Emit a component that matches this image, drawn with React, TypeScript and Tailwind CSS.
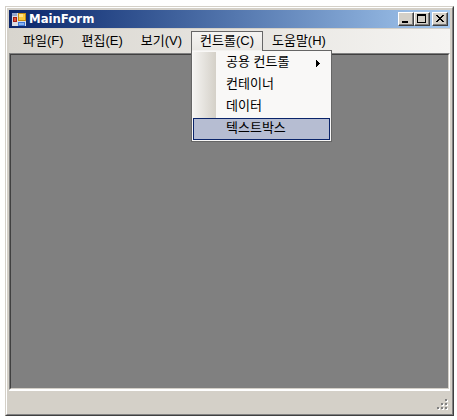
import { useState } from "react";

const MENUS = ["파일(F)", "편집(E)", "보기(V)", "컨트롤(C)", "도움말(H)"];

const CONTROL_ITEMS = [
	{ label: "공용 컨트롤", submenu: true },
	{ label: "컨테이너", submenu: false },
	{ label: "데이터", submenu: false },
	{ label: "텍스트박스", submenu: false },
];

const GRIP_DOTS = [
	[8, 0],
	[4, 4],
	[8, 4],
	[0, 8],
	[4, 8],
	[8, 8],
];

function AppIcon() {
	return (
		<svg className="h-4 w-4 shrink-0" viewBox="0 0 16 16" shapeRendering="crispEdges" aria-hidden="true">
			<rect x="1" y="2" width="14" height="13" fill="#d9dce4" />
			<rect x="1" y="2" width="5" height="3" fill="#93a5cc" />
			<rect x="2" y="6" width="4" height="5" fill="#a51f14" />
			<rect x="3" y="7" width="2" height="3" fill="#e0563c" />
			<rect x="7" y="2" width="8" height="8" fill="#c48c14" />
			<rect x="8" y="3" width="6" height="6" fill="#fac83c" />
			<rect x="8" y="3" width="4" height="3" fill="#fde08a" />
			<rect x="7" y="11" width="7" height="4" fill="#3f78d8" />
			<rect x="8" y="12" width="5" height="2" fill="#86b2f4" />
		</svg>
	);
}

function CaptionButton({ label, children }: { label: string; children: React.ReactNode }) {
	return (
		<button
			type="button"
			aria-label={label}
			className="h-[14px] w-4 border border-t-white border-l-white border-r-[#404040] border-b-[#404040] bg-[#d4d0c8] shadow-[inset_-1px_-1px_0_#808080]"
		>
			<svg className="block h-3 w-[14px]" viewBox="0 0 14 12" shapeRendering="crispEdges" aria-hidden="true">
				{children}
			</svg>
		</button>
	);
}

function TitleBar() {
	return (
		<header className="flex h-[18px] items-center bg-linear-to-r from-[#0a246a] to-[#a6caf0] px-[2px]">
			<AppIcon />
			<h1 className="ml-[2px] flex-1 font-['DejaVu_Sans_Condensed','DejaVu_Sans',sans-serif] text-[13px] leading-4 font-bold text-white">
				MainForm
			</h1>
			<div className="flex">
				<CaptionButton label="Minimize">
					<rect x="3" y="8" width="6" height="2" />
				</CaptionButton>
				<CaptionButton label="Maximize">
					<path d="M2 1h9v9H2zM3 3v6h7V3z" fillRule="evenodd" />
				</CaptionButton>
			</div>
			<div className="ml-[2px] flex">
				<CaptionButton label="Close">
					<path d="M3 2h2v1h1v1h2V3h1V2h2v1h-1v1H9v1H8v1h1v1h1v1h1v1H9V8H8V7H6v1H5v1H3V8h1V7h1V6h1V5H5V4H4V3H3z" />
				</CaptionButton>
			</div>
		</header>
	);
}

function ControlMenu() {
	const [active, setActive] = useState("텍스트박스");

	return (
		<div
			role="menu"
			className="absolute top-[18px] -left-px z-10 w-[141px] border border-[#666666] bg-[#f9f8f7] p-px"
		>
			{/* The open tab runs into the menu */}
			<span className="absolute -top-px left-0 h-px w-[70px] bg-[#f3f2f0]" />
			{CONTROL_ITEMS.map((item) => (
				<button
					key={item.label}
					type="button"
					role="menuitem"
					aria-haspopup={item.submenu ? "menu" : undefined}
					onMouseEnter={() => setActive(item.label)}
					className={`flex h-[22px] w-full items-center justify-between border pr-[9px] pl-8 text-left ${
						active === item.label
							? "border-[#0a246a] bg-[#b6bdd2]"
							: "border-transparent bg-[linear-gradient(90deg,#f5f4f2,#d4d0c8)] bg-[length:23px_100%] [background-origin:border-box] bg-no-repeat"
					}`}
				>
					<span className="pb-[2px] leading-4">{item.label}</span>
					{item.submenu && (
						<svg className="h-[7px] w-1" viewBox="0 0 4 7" shapeRendering="crispEdges" aria-hidden="true">
							<path d="M0 0h1v1h1v1h1v1h1v1H3v1H2v1H1v1H0z" />
						</svg>
					)}
				</button>
			))}
		</div>
	);
}

function MenuBar() {
	const [open, setOpen] = useState("컨트롤(C)");

	return (
		<nav className="mt-px flex h-6 bg-linear-to-r from-[#d8d5ce] to-[#f5f4f2] pt-[2px] pl-[5px]">
			{MENUS.map((label) => (
				<div
					key={label}
					className={`relative h-5 border ${
						open === label ? "border-[#666666] border-b-0 bg-linear-to-b from-[#f5f4f2] to-[#e9e7e3]" : "border-transparent"
					}`}
				>
					<button
						type="button"
						aria-haspopup="menu"
						aria-expanded={open === label}
						onClick={() => setOpen(open === label ? "" : label)}
						className="block px-2 leading-[18px] whitespace-nowrap"
					>
						{label}
					</button>
					{open === label && label === "컨트롤(C)" && <ControlMenu />}
				</div>
			))}
		</nav>
	);
}

function StatusBar() {
	return (
		<footer className="flex h-[21px] items-end justify-end bg-[#d4d0c8] pr-[2px] pb-[2px]">
			<svg className="h-[11px] w-[11px]" viewBox="0 0 11 11" shapeRendering="crispEdges" aria-hidden="true">
				{GRIP_DOTS.map(([x, y]) => (
					<g key={`${x}-${y}`}>
						<rect x={x + 1} y={y + 1} width="2" height="2" fill="#ffffff" />
						<rect x={x} y={y} width="2" height="2" fill="#808080" />
					</g>
				))}
			</svg>
		</footer>
	);
}

export default function App() {
	return (
		<div className="flex h-screen bg-white pt-[6px] pr-[3px] pb-1 pl-[5px] font-['Liberation_Sans','Noto_Sans_CJK_KR',sans-serif] text-[13px] text-black">
			<div className="flex flex-1 border border-t-[#d4d0c8] border-l-[#d4d0c8] border-r-[#404040] border-b-[#404040]">
				<main className="flex min-w-0 flex-1 flex-col border border-t-white border-l-white border-r-[#808080] border-b-[#808080] bg-[#d4d0c8] p-[2px]">
					<TitleBar />
					<MenuBar />
					<section
						aria-label="Workspace"
						className="flex flex-1 border border-t-[#808080] border-l-[#808080] border-r-white border-b-white"
					>
						<div className="flex-1 border border-t-[#404040] border-l-[#404040] border-r-[#d4d0c8] border-b-[#d4d0c8] bg-[#808080]" />
					</section>
					<div className="h-px bg-white" />
					<StatusBar />
				</main>
			</div>
		</div>
	);
}
